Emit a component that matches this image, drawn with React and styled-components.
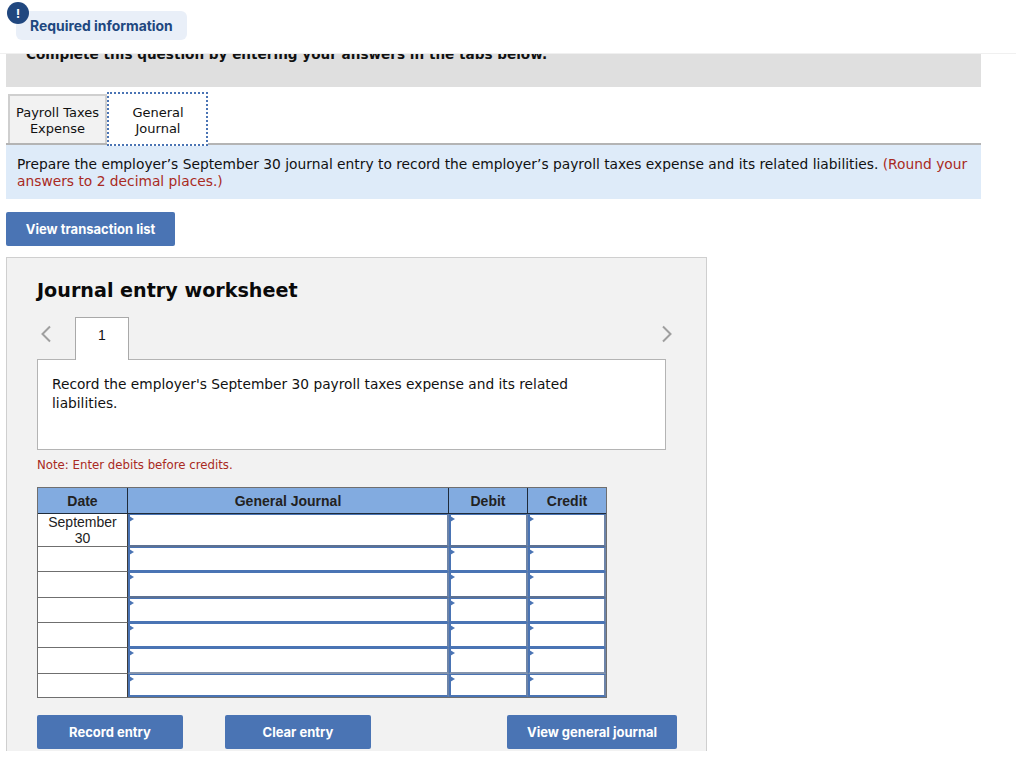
import React from "react";
import styled, { createGlobalStyle } from "styled-components";

const Global = createGlobalStyle`
	html, body {
		margin: 0;
		padding: 0;
		background: #fff;
	}
	* {
		box-sizing: border-box;
	}
`;

const Page = styled.div`
	position: relative;
	height: 751px;
	overflow: hidden;
	padding-left: 6px;
	font-family: "DejaVu Sans", Verdana, sans-serif;
	color: #111;
`;

const Header = styled.div`
	position: absolute;
	left: 0;
	top: 0;
	width: 1016px;
	height: 54px;
	background: #fff;
	border-bottom: 1px solid #f0f0f0;
	z-index: 10;
`;

const Badge = styled.div`
	position: absolute;
	left: 7px;
	top: 2px;
	width: 22px;
	height: 22px;
	border-radius: 50%;
	background: #20477f;
	color: #fff;
	font: 700 12px "Inter", sans-serif;
	display: flex;
	align-items: center;
	justify-content: center;
`;

const Pill = styled.div`
	position: absolute;
	left: 16px;
	top: 11px;
	width: 171px;
	height: 29px;
	padding: 1px 0 0 14px;
	border-radius: 6px;
	background: #e9eff8;
	color: #20477f;
	font: 700 13.9px/29px "Inter", sans-serif;
`;

const Instructions = styled.div`
	width: 975px;
	height: 87px;
	padding: 45px 20px 0;
	background: #dfdfdf;
	font-size: 13.6px;
	font-weight: 700;
	line-height: 18px;
	color: #111;
`;

const TabRow = styled.div`
	display: flex;
	align-items: flex-end;
	height: 58px;
	width: 975px;
	padding: 7px 0 0 2px;
	border-bottom: 2px solid #b4b4b4;
`;

const Tab = styled.div`
	width: ${props => props.$width}px;
	height: ${props => (props.$active ? "54px" : "49px")};
	padding-top: ${props => (props.$active ? "11px" : "9px")};
	margin-bottom: ${props => (props.$active ? "-3px" : "0")};
	font-size: 13px;
	line-height: 16px;
	text-align: center;
	color: #111;
	background: ${props => (props.$active ? "#fff" : "#f2f2f2")};
	border: ${props => (props.$active ? "2px dotted #4a74b4" : "2px solid #cfcfcf")};
	border-bottom: ${props => (props.$active ? "2px dotted #4a74b4" : "none")};
	position: relative;
`;

const TabLabel = styled.div`
	margin-left: ${props => (props.$active ? "1px" : "0")};
`;

const Prompt = styled.div`
	width: 975px;
	height: 54px;
	padding: 11px 11px 0;
	background: #deebf9;
	font-size: 13.8px;
	line-height: 17px;
`;

const Red = styled.span`
	color: #a92a22;
`;

const Button = styled.div`
	display: flex;
	align-items: center;
	justify-content: center;
	width: ${props => props.$width}px;
	height: 34px;
	margin-left: ${props => (props.$push ? "auto" : "0")};
	background: #4a74b4;
	border-radius: 2px;
	color: #fff;
	font: 700 13px "Inter", sans-serif;
`;

const TopAction = styled.div`
	padding: 13px 0 11px;
`;

const Panel = styled.div`
	width: 701px;
	height: 500px;
	padding: 20px 40px 0 30px;
	background: #f2f2f2;
	border: 1px solid #cfcfcf;
	border-width: 1px 1px 0 1px;
`;

const PanelTitle = styled.div`
	font-size: 19.15px;
	font-weight: 700;
	line-height: 26px;
	color: #0a0a0a;
`;

const Stepper = styled.div`
	display: flex;
	align-items: flex-end;
	justify-content: space-between;
	height: 43px;
	margin-top: 13px;
	margin-bottom: -1px;
	position: relative;
	z-index: 1;
`;

const Arrow = styled.svg`
	width: 12px;
	height: 18px;
	margin: 0 ${props => props.$right || 0}px 17px ${props => props.$left || 0}px;
	fill: none;
	stroke: #9f9f9f;
	stroke-width: 2;
`;

const StepTab = styled.div`
	width: 54px;
	height: 43px;
	margin-left: 24px;
	margin-right: auto;
	padding-top: 9px;
	text-align: center;
	background: #fff;
	border: 1px solid #a9a9a9;
	border-bottom: none;
	font: 14px/17px "Liberation Sans", Arial, sans-serif;
`;

const Description = styled.div`
	height: 91px;
	padding: 15px 14px 0;
	background: #fff;
	border: 1px solid #b4b4b4;
	font-size: 13.75px;
	line-height: 19px;
`;

const Note = styled.div`
	margin-top: 8px;
	font-size: 11.75px;
	line-height: 15px;
	color: #a92a22;
`;

const Table = styled.div`
	width: 570px;
	margin-top: 14px;
	display: grid;
	grid-template-columns: 90px 321px 79px 78px;
	border: 1px solid #6f6f6f;
	font-family: "Liberation Sans", Arial, sans-serif;
`;

const HeadCell = styled.div`
	height: 26px;
	display: flex;
	align-items: center;
	justify-content: center;
	background: #82abe0;
	border-right: ${props => (props.$last ? "none" : "1px solid #1f2b3a")};
	border-bottom: 1px solid #1f2b3a;
	font-size: 14px;
	font-weight: 700;
	color: #222;
`;

const DateCell = styled.div`
	height: ${props => props.$height}px;
	padding: 0 6px;
	background: #fff;
	border-right: 1px solid #3c3c3c;
	border-bottom: ${props => (props.$last ? "none" : "1px solid #6f6f6f")};
	text-align: center;
	font-size: 14px;
	line-height: 16px;
	color: #222;
`;

const EntryCell = styled.div`
	position: relative;
	height: ${props => props.$height}px;
	background: #fff;
	border: 2px solid #4a74b4;
	border-top-width: 1px;
	border-right-color: #6d84a8;
	border-bottom-color: ${props => props.$bottom};
`;

const Marker = styled.span`
	position: absolute;
	left: -1px;
	top: 1px;
	width: 0;
	height: 0;
	border-top: 3px solid transparent;
	border-bottom: 3px solid transparent;
	border-left: 5px solid #4a74b4;
`;

const Actions = styled.div`
	display: flex;
	gap: 42px;
	width: 640px;
	margin-top: 17px;
`;

const rows = [
	{ height: 33, date: "September 30", bottom: "#5d7192" },
	{ height: 25, bottom: "#4a74b4" },
	{ height: 26, bottom: "#5d7192" },
	{ height: 25, bottom: "#4a74b4" },
	{ height: 25, bottom: "#4a74b4" },
	{ height: 26, bottom: "#8494ad" },
	{ height: 23, bottom: "#4a74b4", last: true },
];

function App() {
	return (
		<Page>
			<Global />
			<Header>
				<Pill>Required information</Pill>
				<Badge>!</Badge>
			</Header>
			<Instructions>Complete this question by entering your answers in the tabs below.</Instructions>
			<TabRow>
				<Tab $width={99}><TabLabel>Payroll Taxes<br />Expense</TabLabel></Tab>
				<Tab $width={101} $active><TabLabel $active>General<br />Journal</TabLabel></Tab>
			</TabRow>
			<Prompt>
				Prepare the employer’s September 30 journal entry to record the employer’s payroll taxes expense and its related liabilities. <Red>(Round your answers to 2 decimal places.)</Red>
			</Prompt>
			<TopAction>
				<Button $width={169}>View transaction list</Button>
			</TopAction>
			<Panel>
				<PanelTitle>Journal entry worksheet</PanelTitle>
				<Stepper>
					<Arrow viewBox="0 0 12 18" $left={2}><path d="M11 1.5 L3.5 9 L11 16.5" /></Arrow>
					<StepTab>1</StepTab>
					<Arrow viewBox="0 0 12 18" $right={-7}><path d="M2 1.5 L9.5 9 L2 16.5" /></Arrow>
				</Stepper>
				<Description>
					Record the employer's September 30 payroll taxes expense and its related<br />liabilities.
				</Description>
				<Note>Note: Enter debits before credits.</Note>
				<Table>
					<HeadCell>Date</HeadCell>
					<HeadCell>General Journal</HeadCell>
					<HeadCell>Debit</HeadCell>
					<HeadCell $last>Credit</HeadCell>
					{rows.map((row, i) => (
						<React.Fragment key={i}>
							<DateCell $height={row.height} $last={row.last}>{row.date}</DateCell>
							<EntryCell $height={row.height} $bottom={row.bottom}><Marker /></EntryCell>
							<EntryCell $height={row.height} $bottom={row.bottom}><Marker /></EntryCell>
							<EntryCell $height={row.height} $bottom={row.bottom}><Marker /></EntryCell>
						</React.Fragment>
					))}
				</Table>
				<Actions>
					<Button $width={146}>Record entry</Button>
					<Button $width={146}>Clear entry</Button>
					<Button $width={170} $push>View general journal</Button>
				</Actions>
			</Panel>
		</Page>
	);
}

export default App;
